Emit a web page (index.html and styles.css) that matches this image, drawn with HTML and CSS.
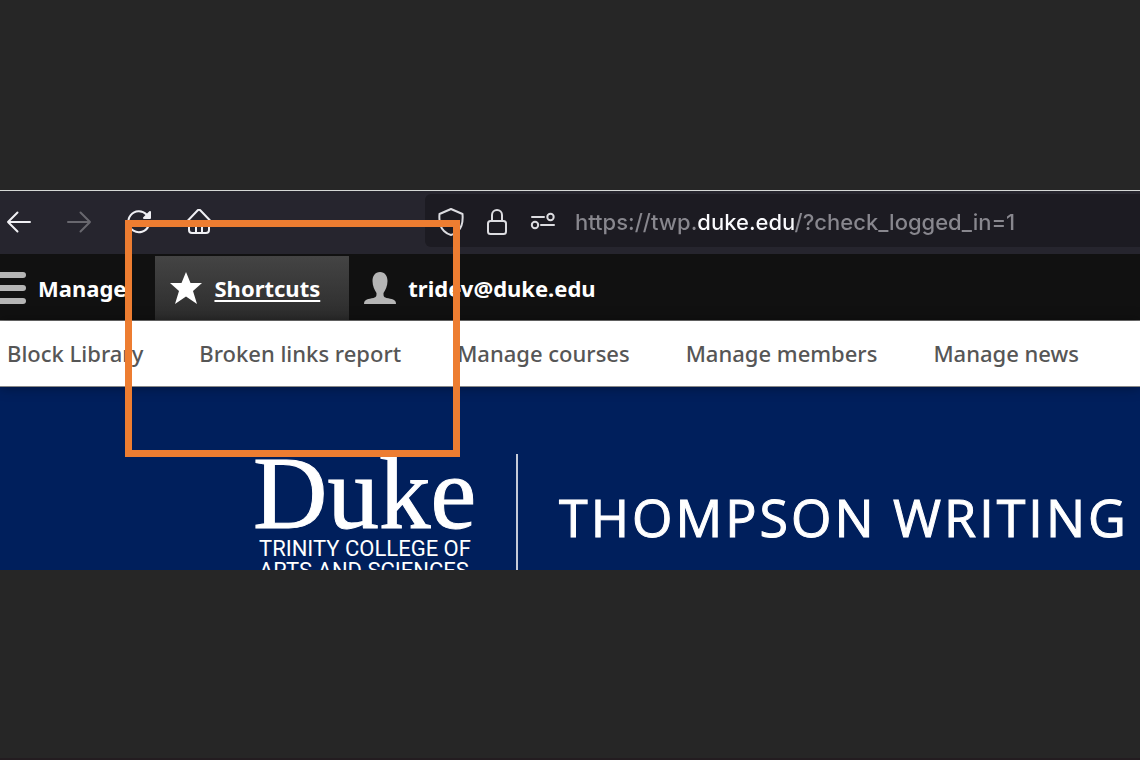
FILE: index.html
```html
<!DOCTYPE html>
<html lang="en">

<head>
    <meta charset="UTF-8">
    <meta name="viewport" content="width=device-width, initial-scale=1.0">
    <title>Thompson Writing</title>
    <link rel="stylesheet" href="styles.css">
</head>

<body>
    <main class="slide">
        <div class="browser">
            <nav class="toolbar" aria-label="Browser">
                <div class="nav-buttons">
                    <button type="button" class="nav-button" aria-label="Back">
                        <svg width="26" height="26" viewBox="0 0 26 26"><path d="M24 13H2M11.500 3.500L2 13l9.500 9.500" /></svg>
                    </button>
                    <button type="button" class="nav-button" aria-label="Forward" disabled>
                        <svg width="26" height="26" viewBox="0 0 26 26"><path d="M2 13h22M14.500 3.500L24 13l-9.500 9.500" /></svg>
                    </button>
                    <button type="button" class="nav-button" aria-label="Reload">
                        <svg width="26" height="26" viewBox="0 0 26 26"><path d="M20.500 5.500A10.500 10.500 0 1 0 22.500 17" /><path class="solid" d="M24 3v6h-6z" /></svg>
                    </button>
                    <button type="button" class="nav-button" aria-label="Home">
                        <svg width="26" height="26" viewBox="0 0 26 26"><path d="M1.500 12L11.500 1.500q1.500-1.500 3 0L24.500 12M3 11v10q0 3 3 3h14q3 0 3-3V11M10 24v-8h6v8" /></svg>
                    </button>
                </div>
                <div class="url-bar">
                    <svg width="26" height="28" viewBox="0 0 26 28"><path d="M13 1L24.500 6q1 12-4.500 17-3 3-7 4-4-1-7-4Q.5 18 1.500 6z" /></svg>
                    <svg width="22" height="28" viewBox="0 0 22 28"><rect x="2" y="13" width="18" height="13" rx="2.500" /><path d="M6 13V7a5 5 0 0 1 10 0v6" /></svg>
                    <svg width="26" height="28" viewBox="0 0 26 28"><path d="M2 9h12M11 17h13" /><circle cx="20.500" cy="9" r="3.200" /><circle cx="5" cy="17" r="3.200" /></svg>
                    <input class="url" type="text" aria-label="Address" value="https://twp.duke.edu/?check_logged_in=1">
                </div>
            </nav>

            <nav class="admin-bar" aria-label="Administration">
                <a href="#" class="tab tab-manage">
                    <svg width="32" height="32" viewBox="0 0 32 32"><rect width="32" height="6" rx="3" /><rect y="13" width="32" height="6" rx="3" /><rect y="26" width="32" height="6" rx="3" /></svg>
                    Manage
                </a>
                <a href="#" class="tab tab-active">
                    <svg width="32" height="32" viewBox="0 0 32 32"><path d="M16 0l4.500 11H32l-9 8 4 13-11-7.500L5 32l4-13-9-8h11.500z" /></svg>
                    <span>Shortcuts</span>
                </a>
                <a href="#" class="tab">
                    <svg width="32" height="32" viewBox="0 0 32 32"><path d="M16 0c5 0 7.500 4 7.500 9 0 5-2 9-4 12 0 3 0 4 3 5 5 1 9.500 1 9.500 6H0c0-5 4.500-5 9.500-6 3-1 3-2 3-5-2-3-4-7-4-12 0-5 2.500-9 7.500-9z" /></svg>
                    tridev@duke.edu
                </a>
            </nav>

            <nav class="tray" aria-label="Shortcuts">
                <a href="#">Block Library</a>
                <a href="#">Broken links report</a>
                <a href="#">Manage courses</a>
                <a href="#">Manage members</a>
                <a href="#">Manage news</a>
            </nav>

            <header class="site-header">
                <a href="#" class="logo">
                    <span class="logo-name">Duke</span>
                    <span class="logo-college">TRINITY COLLEGE OF<br>ARTS AND SCIENCES</span>
                </a>
                <h1 class="site-title">THOMPSON WRITING</h1>
            </header>

            <div class="highlight"></div>
        </div>
    </main>
</body>

</html>
```
FILE: styles.css
```css
* {
    margin: 0;
    padding: 0;
    box-sizing: border-box;
}

body {
    background-color: #262626;
    font-family: "Noto Sans", "Open Sans", sans-serif;
    font-size: 22px;
}

a {
    color: inherit;
    text-decoration: none;
}

.slide {
    min-height: 100vh;
    display: flex;
    flex-direction: column;
    justify-content: center;
    box-shadow: inset 0 -2px #231c20;
}

.browser {
    position: relative;
    overflow: hidden;
    border-top: 1px solid #d5d8d6;
}

/* browser toolbar */
.toolbar {
    display: flex;
    height: 63px;
    padding: 3px 0 7px;
    background-color: #26252e;
}

.nav-buttons {
    display: flex;
    align-items: center;
    gap: 24px;
    width: 425px;
    padding: 2px 0 0 1px;
    flex-shrink: 0;
}

.nav-button {
    width: 36px;
    height: 36px;
    display: grid;
    place-items: center;
    border: 0;
    background: none;
    color: #f0f0f4;
}

.nav-button:disabled {
    color: #68676e;
}

.toolbar svg {
    flex-shrink: 0;
    fill: none;
    stroke: currentColor;
    stroke-width: 2;
    stroke-linecap: round;
    stroke-linejoin: round;
}

.toolbar .solid {
    fill: currentColor;
}

.url-bar {
    flex: 1;
    min-width: 0;
    display: flex;
    align-items: center;
    gap: 22px;
    padding: 2px 0 0 13px;
    border-radius: 6px 0 0 6px;
    background-color: #1c1b22;
    color: #dcdce0;
}

/* the domain is brighter than the rest of the address */
.url {
    flex: 1;
    min-width: 0;
    height: 36px;
    margin-left: -3px;
    border: 0;
    outline: 0;
    font-family: Inter, sans-serif;
    font-size: 22px;
    font-weight: 500;
    color: #88878e;
    background: linear-gradient(90deg, #88878e 122px, #fbfbfe 122px, #fbfbfe 220px, #88878e 220px);
    -webkit-background-clip: text;
    background-clip: text;
    -webkit-text-fill-color: transparent;
}

/* admin bar */
.admin-bar {
    display: flex;
    height: 67px;
    padding-top: 2px;
    border-bottom: 1px solid #777;
    background-color: #111;
    color: #fff;
    font-weight: bold;
}

.tab {
    display: flex;
    align-items: center;
    gap: 12px;
    padding: 0 29px 0 15px;
}

.tab svg {
    flex-shrink: 0;
    fill: #b5b5b5;
}

.tab-manage {
    margin-left: -21px;
}

.tab-active {
    background: linear-gradient(#444, #2c2c2c);
    text-decoration: underline;
    text-decoration-thickness: 2px;
    text-underline-offset: 3px;
}

.tab-active svg {
    fill: #fff;
}

/* shortcuts tray */
.tray {
    position: relative;
    display: flex;
    align-items: center;
    gap: 56px;
    height: 66px;
    padding: 0 0 2px 7px;
    border-bottom: 1px solid #888;
    background-color: #fff;
    box-shadow: 0 0 12px rgba(0, 0, 0, 0.4);
    color: #565656;
    font-weight: 500;
    white-space: nowrap;
}

/* site header */
.site-header {
    display: flex;
    height: 183px;
    padding: 67px 0 0 253px;
    overflow: hidden;
    background-color: #001f5c;
    color: #fff;
    white-space: nowrap;
}

.logo {
    display: flex;
    flex-direction: column;
    width: 265px;
    border-right: 2px solid #c5cad8;
}

.logo-name {
    font-family: "Liberation Serif", serif;
    font-size: 103px;
    line-height: 78px;
    -webkit-text-stroke: 1px #fff;
}

.logo-college {
    padding: 6px 0 0 6px;
    font-family: Roboto, sans-serif;
    font-size: 22px;
    line-height: 22px;
}

.site-title {
    padding-left: 41px;
    font-family: "Open Sans", sans-serif;
    font-size: 52px;
    font-weight: 400;
    line-height: 126px;
    letter-spacing: 3px;
    -webkit-text-stroke: 1px #fff;
}

/* box around the shortcuts tab */
.highlight {
    position: absolute;
    top: 29px;
    left: 125px;
    width: 335px;
    height: 237px;
    border: 7px solid #ed7d31;
}
```
